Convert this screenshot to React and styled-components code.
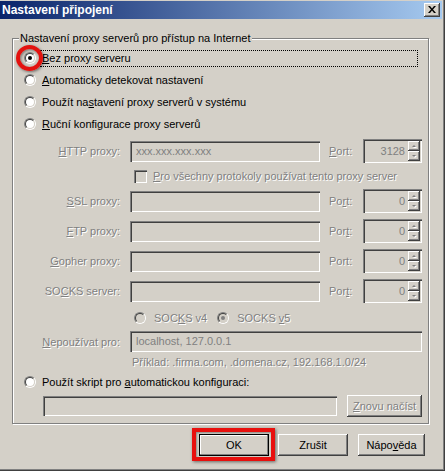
import React from "react";
import styled, { createGlobalStyle } from "styled-components";

const FACE = "#d4d0c8";

const GlobalStyle = createGlobalStyle`
  html, body {
    margin: 0;
    padding: 0;
    background: #d4d0c8;
  }
  body {
    font-family: "Liberation Sans", Arial, sans-serif;
    font-size: 11px;
    color: #000;
  }
`;

const Window = styled.div`
  box-sizing: border-box;
  width: 445px;
  height: 471px;
  padding: 1px 3px 3px 0;
  background: ${FACE};
  box-shadow: inset -1px -1px 0 #404040, inset -2px -2px 0 #808080;
  display: flex;
  flex-direction: column;
`;

const TitleBar = styled.div`
  height: 18px;
  display: flex;
  align-items: center;
  justify-content: space-between;
  padding: 0 2px;
  background: linear-gradient(to right, #0a246a, #a6caf0);
`;

const TitleText = styled.span`
  color: #fff;
  font-weight: bold;
  font-size: 12px;
  line-height: 18px;
`;

const CloseButton = styled.span`
  box-sizing: border-box;
  width: 16px;
  height: 14px;
  padding: 0 1px 1px 0;
  background: ${FACE};
  box-shadow: inset -1px -1px 0 #404040, inset 1px 1px 0 #fff, inset -2px -2px 0 #808080;
  display: flex;
  align-items: center;
  justify-content: center;
`;

const Body = styled.div`
  padding: 19px 13px 0 12px;
  display: flex;
  flex-direction: column;
`;

const GroupBox = styled.div`
  box-sizing: border-box;
  width: 417px;
  border: 1px solid #808080;
  box-shadow: inset 1px 1px 0 #fff, 1px 1px 0 #fff;
  padding: 0 6px 6px 11px;
  display: flex;
  flex-direction: column;
`;

const Legend = styled.span`
  align-self: flex-start;
  margin: -7px 0 0 -5px;
  padding: 0 1px;
  line-height: 13px;
  background: ${FACE};
`;

const RadioRow = styled.div`
  display: flex;
  align-items: center;
  height: ${p => p.$h || 22}px;
  margin-top: ${p => p.$mt || 0}px;
`;

const RadioOuter = styled.span`
  position: relative;
  box-sizing: border-box;
  flex: none;
  width: 12px;
  height: 12px;
  margin-left: ${p => p.$ml || 0}px;
  border-radius: 50%;
  border: 1px solid;
  border-color: #808080 #fff #fff #808080;
  display: flex;
`;

const RadioInner = styled.span`
  box-sizing: border-box;
  width: 10px;
  height: 10px;
  border-radius: 50%;
  border: 1px solid;
  border-color: #404040 ${FACE} ${FACE} #404040;
  background: ${p => (p.$disabled ? FACE : "#fff")};
  display: flex;
  align-items: center;
  justify-content: center;
`;

const RadioDot = styled.span`
  width: 4px;
  height: 4px;
  border-radius: 50%;
  background: ${p => (p.$disabled ? "#808080" : "#000")};
`;

// red marker drawn over the selected radio
const RedRing = styled.span`
  position: absolute;
  box-sizing: border-box;
  left: -9px;
  top: -8px;
  width: 27px;
  height: 26px;
  border-radius: 50%;
  border: 4px solid #e3120f;
  box-shadow: 1px 1px 3px rgba(0, 0, 0, 0.5), inset 1px 1px 3px rgba(0, 0, 0, 0.45);
`;

const OptionLabel = styled.span`
  flex: ${p => (p.$focus ? 1 : "none")};
  margin-left: ${p => p.$ml ?? 4}px;
  margin-right: ${p => (p.$focus ? 4 : 0)}px;
  padding: 0 1px;
  line-height: 15px;
  border: 1px dotted ${p => (p.$focus ? "#000" : "transparent")};
  color: ${p => (p.$disabled ? "#808080" : "#000")};
  text-shadow: ${p => (p.$disabled ? "1px 1px 0 #fff" : "none")};
`;

const Key = styled.u`
  text-decoration: underline;
  text-underline-offset: 1px;
`;

const FieldRow = styled.div`
  display: flex;
  align-items: center;
  height: ${p => p.$h || 24}px;
  margin-top: ${p => p.$mt || 0}px;
`;

const FieldLabel = styled.span`
  flex: none;
  width: 96px;
  margin-right: 10px;
  text-align: right;
  color: #808080;
  text-shadow: 1px 1px 0 #fff;
`;

const TextBox = styled.div`
  box-sizing: border-box;
  flex: ${p => (p.$w ? "none" : 1)};
  width: ${p => (p.$w ? `${p.$w}px` : "auto")};
  height: ${p => p.$h || 21}px;
  margin-left: ${p => p.$ml || 0}px;
  padding: 0 6px;
  line-height: ${p => p.$h || 21}px;
  color: #808080;
  background: ${FACE};
  box-shadow: inset 1px 1px 0 #808080, inset 2px 2px 0 #404040, inset -1px -1px 0 #fff;
  white-space: nowrap;
  overflow: hidden;
`;

const PortLabel = styled.span`
  flex: none;
  width: 34px;
  margin-left: 9px;
  color: #808080;
  text-shadow: 1px 1px 0 #fff;
`;

const SpinBox = styled.div`
  box-sizing: border-box;
  flex: none;
  width: 59px;
  height: 24px;
  padding: 2px;
  display: flex;
  background: ${FACE};
  box-shadow: inset 1px 1px 0 #808080, inset 2px 2px 0 #404040, inset -1px -1px 0 #fff;
`;

const SpinValue = styled.span`
  flex: 1;
  padding-right: 3px;
  text-align: right;
  line-height: 20px;
  color: #808080;
`;

const SpinButtons = styled.div`
  width: 12px;
  display: flex;
  flex-direction: column;
`;

const SpinButton = styled.span`
  flex: 1;
  display: flex;
  align-items: center;
  justify-content: center;
  background: ${FACE};
  box-shadow: inset -1px -1px 0 #404040, inset 1px 1px 0 #fff, inset -2px -2px 0 #808080;
`;

const CheckBox = styled.span`
  box-sizing: border-box;
  flex: none;
  width: 13px;
  height: 13px;
  margin-left: 110px;
  background: ${FACE};
  box-shadow: inset 1px 1px 0 #808080, inset 2px 2px 0 #404040, inset -1px -1px 0 #fff;
`;

const Hint = styled.span`
  padding-left: 108px;
  line-height: 21px;
  color: #808080;
  text-shadow: 1px 1px 0 #fff;
`;

const Button = styled.span`
  position: relative;
  box-sizing: border-box;
  flex: none;
  display: flex;
  align-items: center;
  justify-content: center;
  width: ${p => p.$w}px;
  height: 22px;
  margin-left: ${p => p.$ml || 0}px;
  background: ${FACE};
  color: ${p => (p.$disabled ? "#808080" : "#000")};
  text-shadow: ${p => (p.$disabled ? "1px 1px 0 #fff" : "none")};
  border: ${p => (p.$default ? "1px solid #000" : "none")};
  box-shadow: ${p =>
    p.$default
      ? "inset -1px -1px 0 #808080, inset 1px 1px 0 #fff"
      : "inset -1px -1px 0 #404040, inset 1px 1px 0 #fff, inset -2px -2px 0 #808080"};
`;

// red marker drawn around the OK button
const RedFrame = styled.span`
  position: absolute;
  left: -8px;
  top: -7px;
  right: -7px;
  bottom: -6px;
  border: 4px solid #e8100e;
  box-shadow: 1px 1px 3px rgba(0, 0, 0, 0.5), inset 1px 1px 2px rgba(0, 0, 0, 0.35);
`;

const ButtonRow = styled.div`
  display: flex;
  justify-content: flex-end;
  margin-top: 10px;
  padding-right: 4px;
`;

function Radio({ checked, disabled, ml, children }) {
  return (
    <RadioOuter $ml={ml}>
      <RadioInner $disabled={disabled}>{checked && <RadioDot $disabled={disabled} />}</RadioInner>
      {children}
    </RadioOuter>
  );
}

function Arrow({ up }) {
  const pts = up ? "3,1 5,3 1,3" : "1,1 5,1 3,3";
  return (
    <svg width="6" height="4" viewBox="0 0 6 4">
      <polygon points={pts} fill="#fff" transform="translate(1,1)" />
      <polygon points={pts} fill="#808080" />
    </svg>
  );
}

function Spin({ value }) {
  return (
    <SpinBox>
      <SpinValue>{value}</SpinValue>
      <SpinButtons>
        <SpinButton>
          <Arrow up />
        </SpinButton>
        <SpinButton>
          <Arrow />
        </SpinButton>
      </SpinButtons>
    </SpinBox>
  );
}

function ProxyRow({ label, value, port, mt }) {
  return (
    <FieldRow $mt={mt}>
      <FieldLabel>{label}</FieldLabel>
      <TextBox $w={190}>{value}</TextBox>
      <PortLabel>{port}</PortLabel>
      <Spin value={value ? "3128" : "0"} />
    </FieldRow>
  );
}

export default function App() {
  return (
    <>
      <GlobalStyle />
      <Window>
        <TitleBar>
          <TitleText>Nastavení připojení</TitleText>
          <CloseButton>
            <svg width="8" height="7" viewBox="0 0 8 7">
              <path d="M0 0H2L4 2.4L6 0H8L5 3.5L8 7H6L4 4.6L2 7H0L3 3.5Z" fill="#000" />
            </svg>
          </CloseButton>
        </TitleBar>

        <Body>
          <GroupBox>
            <Legend>Nastavení proxy serverů pro přístup na Internet</Legend>

            <RadioRow $mt={2}>
              <Radio checked>
                <RedRing />
              </Radio>
              <OptionLabel $focus>
                <Key>B</Key>ez proxy serveru
              </OptionLabel>
            </RadioRow>
            <RadioRow>
              <Radio />
              <OptionLabel>
                <Key>A</Key>utomaticky detekovat nastavení
              </OptionLabel>
            </RadioRow>
            <RadioRow>
              <Radio />
              <OptionLabel>
                Použít na<Key>s</Key>tavení proxy serverů v systému
              </OptionLabel>
            </RadioRow>
            <RadioRow>
              <Radio />
              <OptionLabel>
                <Key>R</Key>uční konfigurace proxy serverů
              </OptionLabel>
            </RadioRow>

            <ProxyRow
              mt={4}
              value="xxx.xxx.xxx.xxx"
              label={<><Key>H</Key>TTP proxy:</>}
              port={<><Key>P</Key>ort:</>}
            />
            <FieldRow $h={26}>
              <CheckBox />
              <OptionLabel $ml={4} $disabled>
                <Key>P</Key>ro všechny protokoly používat tento proxy server
              </OptionLabel>
            </FieldRow>
            <ProxyRow label={<><Key>S</Key>SL proxy:</>} port={<>Po<Key>r</Key>t:</>} />
            <ProxyRow mt={6} label={<><Key>F</Key>TP proxy:</>} port={<>Por<Key>t</Key>:</>} />
            <ProxyRow mt={6} label={<><Key>G</Key>opher proxy:</>} port="Port:" />
            <ProxyRow mt={6} label={<>SO<Key>C</Key>KS server:</>} port={<>Por<Key>t</Key>:</>} />

            <FieldRow $h={26} $mt={2}>
              <Radio ml={110} disabled />
              <OptionLabel $ml={6} $disabled>
                SOC<Key>K</Key>S v4
              </OptionLabel>
              <Radio ml={8} checked disabled />
              <OptionLabel $ml={6} $disabled>
                SOCKS <Key>v</Key>5
              </OptionLabel>
            </FieldRow>

            <FieldRow $h={21}>
              <FieldLabel>
                <Key>N</Key>epoužívat pro:
              </FieldLabel>
              <TextBox>localhost, 127.0.0.1</TextBox>
            </FieldRow>
            <FieldRow $h={21}>
              <Hint>Příklad: .firma.com, .domena.cz, 192.168.1.0/24</Hint>
            </FieldRow>

            <RadioRow $h={18}>
              <Radio />
              <OptionLabel>
                Použít skript pro <Key>a</Key>utomatickou konfiguraci:
              </OptionLabel>
            </RadioRow>
            <FieldRow $h={22} $mt={4}>
              <TextBox $w={294} $h={20} $ml={19} />
              <Button $w={75} $ml={10} $disabled>
                <span>
                  <Key>Z</Key>novu načíst
                </span>
              </Button>
            </FieldRow>
          </GroupBox>

          <ButtonRow>
            <Button $w={70} $default>
              OK
              <RedFrame />
            </Button>
            <Button $w={70} $ml={9}>
              Zrušit
            </Button>
            <Button $w={67} $ml={10}>
              <span>
                Nápo<Key>v</Key>ěda
              </span>
            </Button>
          </ButtonRow>
        </Body>
      </Window>
    </>
  );
}
